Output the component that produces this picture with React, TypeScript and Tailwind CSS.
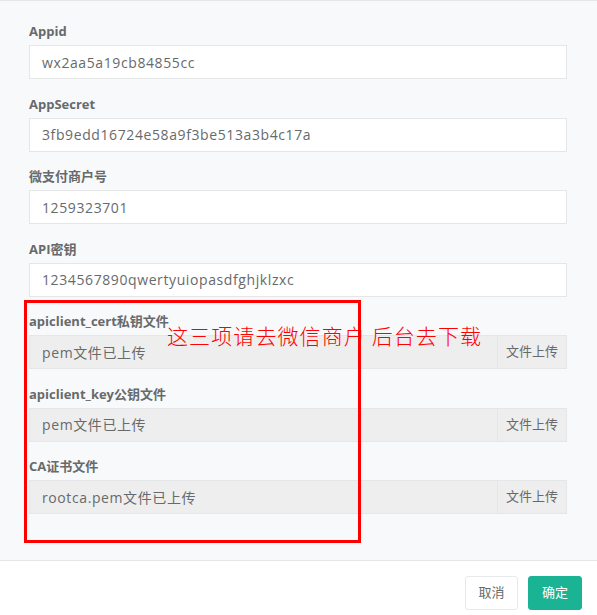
const fields = [
  { label: "Appid", value: "wx2aa5a19cb84855cc" },
  { label: "AppSecret", value: "3fb9edd16724e58a9f3be513a3b4c17a" },
  { label: "微支付商户号", value: "1259323701" },
  { label: "API密钥", value: "1234567890qwertyuiopasdfghjklzxc" },
];

const files = [
  { label: "apiclient_cert私钥文件", value: "pem文件已上传" },
  { label: "apiclient_key公钥文件", value: "pem文件已上传" },
  { label: "CA证书文件", value: "rootca.pem文件已上传" },
];

const font = { fontFamily: '"Open Sans", "Noto Sans CJK SC", sans-serif' };

export default function App() {
  return (
    <div
      className="relative flex h-[615px] w-[597px] flex-col bg-white text-[#676a6c]"
      style={font}
    >
      <div className="flex flex-col gap-[15.5px] border-t border-b border-[#e5e6e7] bg-[#f8f9fa] pt-[21px] pr-[30px] pb-[46px] pl-[29px]">
        {fields.map((f) => (
          <div key={f.label}>
            <div className="mb-[5px] text-[13px] leading-[18px] font-bold">{f.label}</div>
            <div className="flex h-[34px] items-center border border-[#e5e6e7] bg-white px-3 text-[14px] tracking-[0.6px]">
              {f.value}
            </div>
          </div>
        ))}
        {files.map((f) => (
          <div key={f.label}>
            <div className="mb-[5px] text-[13px] leading-[18px] font-bold">{f.label}</div>
            <div className="flex h-[34px] border border-[#e5e6e7] bg-[#eeeeee]">
              <div className="flex flex-1 items-center px-3 text-[14px] tracking-[0.6px]">
                {f.value}
              </div>
              <div className="flex w-[69px] items-center justify-center border-l border-[#e5e6e7] text-[13px]">
                文件上传
              </div>
            </div>
          </div>
        ))}
      </div>

      <div className="flex flex-1 items-start justify-end gap-[10px] pt-[15px] pr-[15px]">
        <button className="h-[34px] w-[53px] rounded-[3px] border border-[#e7eaec] bg-white text-[13px] text-[#676a6c]">
          取消
        </button>
        <button className="h-[34px] w-[54px] rounded-[3px] border border-[#1ab394] bg-[#1ab394] text-[13px] text-white">
          确定
        </button>
      </div>

      <div className="pointer-events-none absolute top-[300px] left-[24px] h-[243px] w-[337px] border-[3px] border-[#ff0000]" />
      <div
        className="pointer-events-none absolute top-[325px] left-[167px] text-[21px] leading-[21px] tracking-[1.1px] whitespace-pre text-[#ff0000]"
        style={{ fontFamily: '"Noto Sans CJK SC", sans-serif', fontWeight: 300 }}
      >
        这三项请去微信商户 后台去下载
      </div>
    </div>
  );
}
